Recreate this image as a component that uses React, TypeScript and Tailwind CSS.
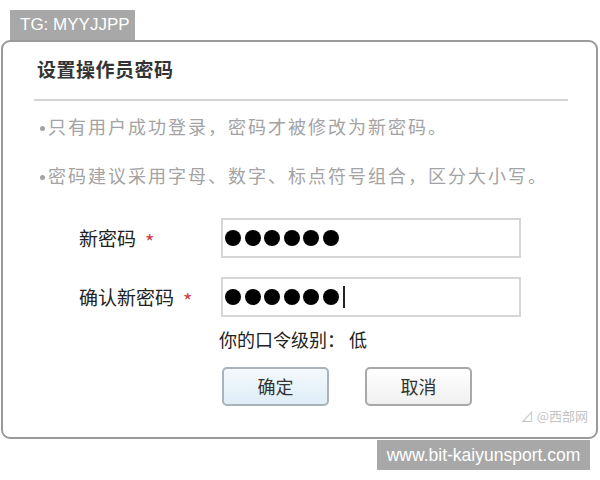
import React from 'react';

const cjk = { fontFamily: "'Noto Sans CJK SC', 'Noto Sans', sans-serif" };

function Dots({ count, caret }: { count: number; caret?: boolean }) {
  return (
    <div className="flex items-center gap-[3.5px] pl-[2px]">
      {Array.from({ length: count }).map((_, i) => (
        <span key={i} className="block w-[16px] h-[16px] rounded-full bg-black" />
      ))}
      {caret && <span className="block w-[1.5px] h-[22px] bg-[#222] ml-[1px]" />}
    </div>
  );
}

function Bullet({ children, className }: { children: React.ReactNode; className?: string }) {
  return (
    <p className={`flex items-center ${className ?? ''}`}>
      <span className="block w-[5px] h-[5px] rounded-full bg-[#a3a3a3] mr-[3px] mt-[4px]" />
      {children}
    </p>
  );
}

export default function App() {
  return (
    <main className="relative w-[600px] h-[480px] bg-white overflow-hidden" style={cjk}>
      <div className="pt-[40px] pl-[1px]">
        <div className="w-[597px] h-[399px] rounded-[9px] border-2 border-[#9a9a9a] bg-white">
          <h1 className="pl-[34px] pt-[13px] text-[19px] font-bold text-[#333] leading-[28px] tracking-[0.5px]">
            设置操作员密码
          </h1>
          <div className="ml-[31px] mr-[28px] mt-[16px] h-[2px] bg-[#d4d4d4]" />
          <div className="pl-[37px] pt-[13px] text-[18px] text-[#a3a3a3] leading-[24px] tracking-[2px]">
            <Bullet>只有用户成功登录，密码才被修改为新密码。</Bullet>
            <Bullet className="mt-[25px]">密码建议采用字母、数字、标点符号组合，区分大小写。</Bullet>
          </div>

          <div className="mt-[31px] grid grid-cols-[142px_300px] gap-y-[19px] pl-[76px] items-center">
            <div className="flex items-center text-[19px] text-[#222] leading-[28px]">
              新密码<span className="ml-[9px] text-[#d23c48] text-[20px] leading-none translate-y-[4px]">*</span>
            </div>
            <div className="h-[40px] border-2 border-[#d6d6d6] flex items-center">
              <Dots count={6} />
            </div>
            <div className="flex items-center text-[19px] text-[#222] leading-[28px]">
              确认新密码<span className="ml-[9px] text-[#d23c48] text-[20px] leading-none translate-y-[4px]">*</span>
            </div>
            <div className="h-[40px] border-2 border-[#d6d6d6] flex items-center">
              <Dots count={6} caret />
            </div>
          </div>

          <div className="pl-[216px] mt-[9px] text-[18px] text-[#222] leading-[26px]">
            你的口令级别： 低
          </div>

          <div className="pl-[219px] mt-[15px] flex gap-[36px]">
            <button className="w-[107px] h-[39px] rounded-[5px] border-2 border-[#a9b3ba] bg-gradient-to-b from-[#f3f9fd] to-[#deedf7] text-[18px] text-[#333]">
              确定
            </button>
            <button className="w-[107px] h-[39px] rounded-[5px] border-2 border-[#a8a8a8] bg-gradient-to-b from-white to-[#f0f0f0] text-[18px] text-[#333]">
              取消
            </button>
          </div>

          <div className="flex justify-end pr-[8px] mt-[1px] text-[13px] text-[#c4c4c4] leading-[18px]">
            ⊿ @西部网
          </div>
        </div>
      </div>

      <div
        className="absolute left-[10px] top-[10px] w-[125px] h-[30px] bg-[#a8a8a8] text-white text-[17px] leading-[30px] pl-[10px]"
        style={{ fontFamily: "'Liberation Sans', Arial, sans-serif" }}
      >
        TG: MYYJJPP
      </div>
      <div
        className="absolute left-[377px] top-[440px] w-[213px] h-[30px] bg-[#a8a8a8] text-white text-[17.5px] leading-[30px] text-center"
        style={{ fontFamily: "'Liberation Sans', Arial, sans-serif" }}
      >
        www.bit-kaiyunsport.com
      </div>
    </main>
  );
}
